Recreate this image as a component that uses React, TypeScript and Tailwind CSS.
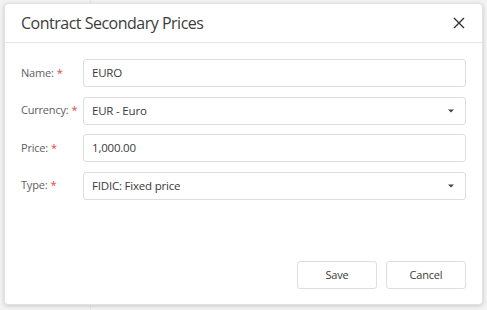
import type { ReactNode } from 'react';

const font = { fontFamily: '"Open Sans", "Noto Sans", sans-serif' };

function Label({ children }: { children: ReactNode }) {
  return (
    <div className="w-[62px] shrink-0 text-[11px] tracking-[-0.2px] text-[#606060]">
      {children}
      <span className="ml-[3px] text-[#e0474c]">*</span>
    </div>
  );
}

function Field({ label, value, select }: { label: string; value: string; select?: boolean }) {
  return (
    <div className="flex items-center">
      <Label>{label}</Label>
      <div className="flex h-[28px] flex-1 items-center justify-between rounded-[3px] border border-[#dedede] bg-white pl-[8px] pr-[11px] text-[11.5px] tracking-[-0.2px] text-[#3a3a3a]">
        <span>{value}</span>
        {select && (
          <svg width="6" height="4" viewBox="0 0 6 4" className="text-[#444]">
            <path d="M0 0.5h6L3 3.5z" fill="currentColor" />
          </svg>
        )}
      </div>
    </div>
  );
}

export default function App() {
  return (
    <div className="relative h-[310px] w-[487px] overflow-hidden bg-[#f3f3f3] pl-[4px] pt-[3px]" style={font}>
      <div className="pointer-events-none absolute left-[90px] top-0 h-full w-px bg-[#e6e6e6]" />
      <div className="relative flex h-[302px] w-[479px] flex-col rounded-[4px] border border-[#e2e2e2] bg-white shadow-[0_1px_4px_rgba(0,0,0,0.18)]">
        <div className="flex h-[39px] items-center justify-between border-b border-[#e5e5e5] pl-[16px] pr-[16px]">
          <span className="text-[16px] tracking-[-0.5px] text-[#3c3c3c]">Contract Secondary Prices</span>
          <svg width="12" height="12" viewBox="0 0 12 12" className="mr-[1px]">
            <path d="M1 1l10 10M11 1L1 11" stroke="#333" strokeWidth="1.4" />
          </svg>
        </div>
        <div className="flex flex-col gap-[9.5px] px-[16px] pt-[16px]">
          <Field label="Name:" value="EURO" />
          <Field label="Currency:" value="EUR - Euro" select />
          <Field label="Price:" value="1,000.00" />
          <Field label="Type:" value="FIDIC: Fixed price" select />
        </div>
        <div className="mt-auto flex justify-end gap-[9px] px-[16px] pb-[15px]">
          <button className="h-[28px] w-[80px] rounded-[3px] border border-[#dedede] bg-white text-[11px] tracking-[-0.2px] text-[#3a3a3a]">
            Save
          </button>
          <button className="h-[28px] w-[80px] rounded-[3px] border border-[#dedede] bg-white text-[11px] tracking-[-0.2px] text-[#3a3a3a]">
            Cancel
          </button>
        </div>
      </div>
    </div>
  );
}
